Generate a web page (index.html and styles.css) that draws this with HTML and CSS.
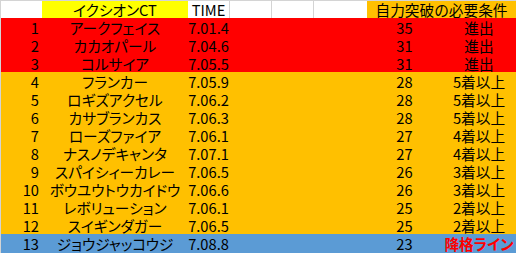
FILE: index.html
```html
<!DOCTYPE html>
<html lang="ja">
<head>
<meta charset="utf-8">
<link rel="stylesheet" href="styles.css">
</head>
<body>
<div class="sheet">
  <div class="row head">
    <div class="c no"></div>
    <div class="c name yellow">イクシオンCT</div>
    <div class="c time">TIME</div>
    <div class="c blank"></div>
    <div class="c blank"></div>
    <div class="c blank"></div>
    <div class="c req">自力突破の必要条件</div>
  </div>
  <div class="row red"><div class="c no">1</div><div class="c name">アークフェイス</div><div class="c time">7.01.4</div><div class="c sp"></div><div class="c pt">35</div><div class="c cond">進出</div></div>
  <div class="row red"><div class="c no">2</div><div class="c name">カカオパール</div><div class="c time">7.04.6</div><div class="c sp"></div><div class="c pt">31</div><div class="c cond">進出</div></div>
  <div class="row red"><div class="c no">3</div><div class="c name">コルサイア</div><div class="c time">7.05.5</div><div class="c sp"></div><div class="c pt">31</div><div class="c cond">進出</div></div>
  <div class="row orange"><div class="c no">4</div><div class="c name">フランカー</div><div class="c time">7.05.9</div><div class="c sp"></div><div class="c pt">28</div><div class="c cond">5着以上</div></div>
  <div class="row orange"><div class="c no">5</div><div class="c name">ロギズアクセル</div><div class="c time">7.06.2</div><div class="c sp"></div><div class="c pt">28</div><div class="c cond">5着以上</div></div>
  <div class="row orange"><div class="c no">6</div><div class="c name">カサブランカス</div><div class="c time">7.06.3</div><div class="c sp"></div><div class="c pt">28</div><div class="c cond">5着以上</div></div>
  <div class="row orange"><div class="c no">7</div><div class="c name">ローズファイア</div><div class="c time">7.06.1</div><div class="c sp"></div><div class="c pt">27</div><div class="c cond">4着以上</div></div>
  <div class="row orange"><div class="c no">8</div><div class="c name">ナスノデキャンタ</div><div class="c time">7.07.1</div><div class="c sp"></div><div class="c pt">27</div><div class="c cond">4着以上</div></div>
  <div class="row orange"><div class="c no">9</div><div class="c name">スパイシィーカレー</div><div class="c time">7.06.5</div><div class="c sp"></div><div class="c pt">26</div><div class="c cond">3着以上</div></div>
  <div class="row orange"><div class="c no">10</div><div class="c name">ボウユウトウカイドウ</div><div class="c time">7.06.6</div><div class="c sp"></div><div class="c pt">26</div><div class="c cond">3着以上</div></div>
  <div class="row orange"><div class="c no">11</div><div class="c name">レボリューション</div><div class="c time">7.06.1</div><div class="c sp"></div><div class="c pt">25</div><div class="c cond">2着以上</div></div>
  <div class="row orange"><div class="c no">12</div><div class="c name">スイギンダガー</div><div class="c time">7.06.5</div><div class="c sp"></div><div class="c pt">25</div><div class="c cond">2着以上</div></div>
  <div class="row blue"><div class="c no">13</div><div class="c name">ジョウジャッコウジ</div><div class="c time">7.08.8</div><div class="c sp"></div><div class="c pt">23</div><div class="c cond down">降格ライン</div></div>
</div>
</body>
</html>
```
FILE: styles.css
```css
html, body {
  margin: 0;
  padding: 0;
  background: #ffffff;
}
body {
  width: 516px;
  height: 253px;
  overflow: hidden;
  font-family: "Noto Sans CJK JP", "Noto Sans", sans-serif;
  font-size: 14.67px;
  color: #000000;
}
.sheet {
  border-top: 1px solid #d4d4d4;
  border-left: 1px solid #d4d4d4;
  width: 515px;
}
.row {
  display: grid;
  grid-template-columns: 41px 146px 41px 42px 42px 54px 75px 74px;
  grid-template-rows: 16px;
  box-sizing: border-box;
  height: 18px;
  padding-top: 2px;
  line-height: 16px;
}
.row .sp { grid-column: 4 / span 3; }
.head {
  height: 17px;
  padding-top: 0;
  grid-template-rows: 17px;
}
.head .c {
  padding-top: 1px;
  line-height: 16px;
}
.red { background: #ff0000; }
.orange { background: #ffc000; }
.blue {
  background: #5b9bd5;
  height: 19px;
}
.c {
  white-space: nowrap;
  min-width: 0;
}
.no {
  text-align: right;
  padding-right: 3px;
}
.name {
  text-align: center;
  font-feature-settings: "palt";
}
.yellow { background: #ffff00; }
.time { text-align: center; }
.head .time { background: #ffffff; }
.blank { border-left: 1px solid #d4d4d4; }
.req {
  grid-column: 7 / span 2;
  background: #ffc000;
  text-align: center;
}
.pt { text-align: center; }
.cond {
  text-align: center;
  font-feature-settings: "palt";
}
.down {
  color: #ff0000;
  font-weight: bold;
}
```
